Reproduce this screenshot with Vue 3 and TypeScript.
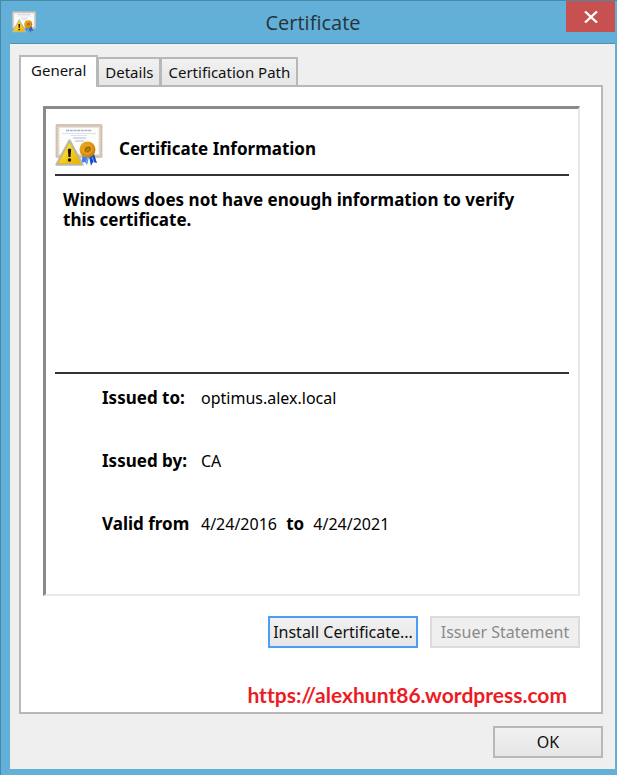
<script setup lang="ts">
import { ref } from 'vue'

const tabs: string[] = ['General', 'Details', 'Certification Path']
const active = ref<string>('General')
</script>

<template>
  <div class="window">
    <header class="titlebar">
      <svg class="app-icon" viewBox="0 0 48 44" aria-hidden="true">
        <use href="#cert-art" />
      </svg>
      <h1 class="title">Certificate</h1>
      <button class="close" type="button" aria-label="Close">
        <svg viewBox="0 0 14 12" aria-hidden="true">
          <path d="M1 0.5 L13 11.5 M13 0.5 L1 11.5" />
        </svg>
      </button>
    </header>

    <main class="client">
      <div class="tabs" role="tablist">
        <button
          v-for="tab in tabs"
          :key="tab"
          class="tab"
          :class="{ active: tab === active }"
          type="button"
          role="tab"
          :aria-selected="tab === active"
          @click="active = tab"
        >{{ tab }}</button>
      </div>

      <section class="panel" role="tabpanel">
        <div class="sheet">
          <div class="heading">
            <svg class="cert-icon" viewBox="0 0 48 44" aria-hidden="true">
              <defs>
                <linearGradient id="gold" x1="0" y1="0" x2="1" y2="1">
                  <stop offset="0" stop-color="#eeb024" />
                  <stop offset="1" stop-color="#c07605" />
                </linearGradient>
                <linearGradient id="warn" x1="0" y1="0" x2="1" y2="1">
                  <stop offset="0" stop-color="#fff04a" />
                  <stop offset="1" stop-color="#e9ae00" />
                </linearGradient>
                <g id="cert-art">
                  <rect x="0.5" y="1" width="47" height="34" rx="1.5" fill="#d9cbbb" />
                  <rect x="1.5" y="2" width="45" height="32" rx="1" fill="none" stroke="#c4b5a6" stroke-width="1" stroke-dasharray="1.5 1.5" />
                  <rect x="4" y="4.5" width="40" height="27" fill="#fdfdfb" stroke="#ebe3da" />
                  <path d="M11 7.5H37" stroke="#a9b3ce" stroke-width="1.4" stroke-dasharray="3 0.7" />
                  <path d="M7 10.5H41M16 12.5H32" stroke="#dcdff0" stroke-width="1" />
                  <path d="M18 15H31M20 18H29" stroke="#b3bad4" stroke-width="1" />
                  <path d="M28 32 L34 34 L32 42 L30 39 L26 40 Z" fill="#3f83ea" />
                  <path d="M34 33 L39 31 L42 40 L38 39 L36 43 Z" fill="#1449bd" />
                  <path d="M33 34L31 40M37 34L39 39" stroke="#83b5fb" stroke-width="1" />
                  <circle cx="32.5" cy="26.5" r="8" fill="url(#gold)" />
                  <circle cx="32.5" cy="26.5" r="4.5" fill="#d68d0d" stroke="#f0c040" stroke-width="0.7" />
                  <path d="M30.5 28.5q0-4 4-4q2 3-2.5 4" fill="none" stroke="#9b5c00" stroke-width="1.3" />
                  <path d="M14.5 17.5 L27.5 41.5 H1.5 Z" fill="url(#warn)" stroke="#b9b9b4" stroke-width="2.4" stroke-linejoin="round" />
                  <path d="M14.5 20 L26 40.5 H3 Z" fill="url(#warn)" stroke="#e6b800" stroke-width="0.6" />
                  <path d="M12.8 26.5q1.7-2 3.4 0L15.5 34h-2z" fill="#15150c" />
                  <circle cx="14.5" cy="37" r="1.7" fill="#15150c" />
                </g>
              </defs>
              <use href="#cert-art" />
            </svg>
            <h2>Certificate Information</h2>
          </div>

          <p class="message">Windows does not have enough information to verify this certificate.</p>

          <dl class="details">
            <div class="row">
              <dt>Issued to:</dt>
              <dd>optimus.alex.local</dd>
            </div>
            <div class="row">
              <dt>Issued by:</dt>
              <dd>CA</dd>
            </div>
            <div class="row">
              <dt>Valid from</dt>
              <dd class="dates">4/24/2016 <b>to</b> 4/24/2021</dd>
            </div>
          </dl>
        </div>

        <div class="actions">
          <button class="btn primary" type="button">Install Certificate...</button>
          <button class="btn" type="button" disabled>Issuer Statement</button>
        </div>

        <a class="site" href="https://alexhunt86.wordpress.com">https://alexhunt86.wordpress.com</a>
      </section>

      <footer class="footer">
        <button class="btn ok" type="button">OK</button>
      </footer>
    </main>
  </div>
</template>

<style>
body {
  margin: 0;
}
</style>

<style scoped>
* {
  box-sizing: border-box;
}

.window {
  display: flex;
  flex-direction: column;
  min-height: 100vh;
  padding: 0 2px 6px 9px;
  border-top: 1px solid #4787a8;
  border-left: 1px solid #4787a8;
  background: #62b0d8;
  color: #000;
  font-family: "Noto Sans", "DejaVu Sans", sans-serif;
  font-size: 16px;
  line-height: 20px;
}

.titlebar {
  display: grid;
  grid-template-columns: 50px 1fr 49px;
  align-items: center;
  height: 42px;
}

.app-icon {
  width: 24px;
  height: 24px;
  margin-left: 2px;
}

.title {
  margin: 2px 0 0;
  color: #27333a;
  font: 400 20px/30px "Open Sans", sans-serif;
  text-align: center;
}

.close {
  display: flex;
  align-items: center;
  justify-content: center;
  align-self: start;
  height: 31px;
  padding: 0;
  border: 0;
  background: #c75050;
}

.close svg {
  width: 14px;
  height: 12px;
}

.close path {
  fill: none;
  stroke: #fff;
  stroke-width: 2.3;
}

.client {
  display: flex;
  flex: 1;
  flex-direction: column;
  padding: 11px 12px 11px 9px;
  border-top: 1px solid #4d93b5;
  background: #efefef;
}

.tabs {
  display: flex;
  align-items: flex-end;
}

.tab {
  height: 28px;
  margin-left: -1px;
  padding: 0 6px;
  border: 2px solid #b8b8b8;
  border-bottom: 0;
  background: linear-gradient(#f1f1f1, #e6e6e6);
  color: #111;
  font: inherit;
  font-size: 15px;
  white-space: nowrap;
}

.tab.active {
  z-index: 1;
  height: 32px;
  margin: 0 0 -2px;
  padding: 0 10px 4px;
  background: #fff;
}

.panel {
  display: flex;
  flex: 1;
  flex-direction: column;
  padding: 19px 21px 2px 22px;
  border: 2px solid #b8b8b8;
  background: #fff;
}

.sheet {
  padding: 14px 9px 0;
  border: 1px solid #e8e8e8;
  border-width: 3px 2px 2px 3px;
  border-top-color: #8a8a8a;
  border-left-color: #8a8a8a;
}

.heading {
  display: flex;
  gap: 16px;
  height: 53px;
  border-bottom: 2px solid #333;
}

.cert-icon {
  width: 48px;
  height: 44px;
}

.heading h2 {
  margin: 16px 0 0;
  font-size: 17px;
  line-height: 20px;
}

.message {
  min-height: 198px;
  margin: 0;
  padding: 14px 40px 0 8px;
  border-bottom: 2px solid #333;
  font-size: 17px;
  font-weight: 700;
}

.details {
  display: grid;
  gap: 43px;
  min-height: 220px;
  margin: 0;
  padding: 14px 0 0 47px;
  align-content: start;
}

.row {
  display: grid;
  grid-template-columns: 87px 1fr;
  gap: 12px;
}

.row dt,
.dates b {
  font-size: 17px;
  font-weight: 700;
  white-space: nowrap;
}

.row dd {
  margin: 0;
}

.dates b {
  margin: 0 5px;
}

.actions {
  display: flex;
  justify-content: flex-end;
  gap: 12px;
  margin-top: 20px;
}

.btn {
  width: 150px;
  height: 32px;
  padding: 0;
  border: 2px solid #b8b8b8;
  background: linear-gradient(#f1f1f1, #e6e6e6);
  color: #111;
  font: inherit;
  white-space: nowrap;
}

.btn.primary {
  border-color: #4a9ff5;
}

.btn:disabled {
  border-color: #dcdcdc;
  background: #efefef;
  color: #8a8a8a;
}

.site {
  align-self: flex-end;
  margin: 33px 13px 0 0;
  color: #ed1c24;
  font: 700 21px/28px Lato, sans-serif;
  font-variant-ligatures: none;
  text-decoration: none;
}

.footer {
  display: flex;
  justify-content: flex-end;
  margin-top: 12px;
}

.btn.ok {
  width: 110px;
}
</style>
